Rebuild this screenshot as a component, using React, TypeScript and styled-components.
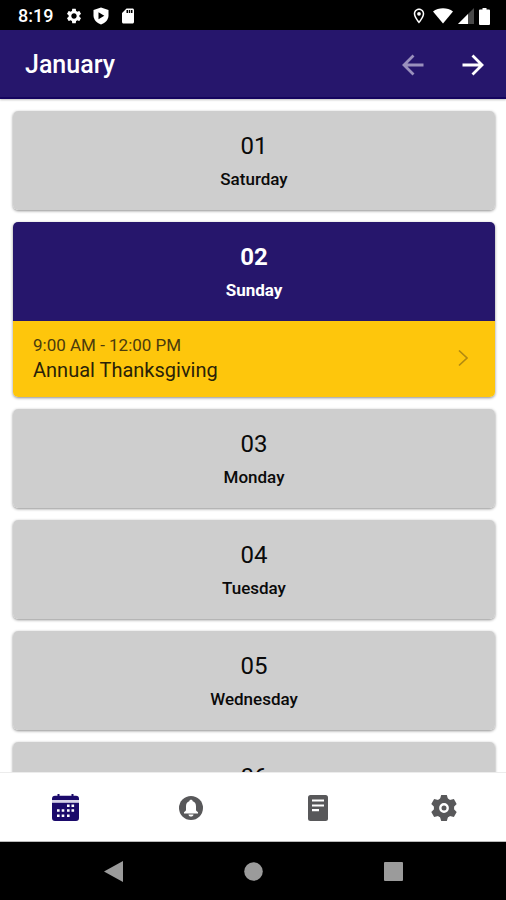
import React from "react";
import styled, { createGlobalStyle, css } from "styled-components";
import { MdSettings, MdSdCard, MdOutlineLocationOn } from "react-icons/md";

const colors = {
  navy: "#26166c",
  navyEdge: "#15045f",
  gold: "#fec60c",
  card: "#cecece",
  tab: "#58585a",
};

const GlobalStyle = createGlobalStyle`
  * { box-sizing: border-box; }
  body { margin: 0; background: #fff; font-family: Roboto, sans-serif; }
  button { font: inherit; border: 0; padding: 0; margin: 0; background: none; color: inherit; cursor: pointer; }
  svg { display: block; flex: none; }
`;

const Screen = styled.div`
  display: flex;
  flex-direction: column;
  height: 100vh;
  overflow: hidden;
`;

const StatusBar = styled.div`
  flex: none;
  display: flex;
  align-items: center;
  justify-content: space-between;
  height: 30px;
  padding: 2px 16px 0 18px;
  background: #000;
  color: #fff;
`;

const StatusGroup = styled.div<{ $gap: number }>`
  display: flex;
  align-items: center;
  gap: ${(p) => p.$gap}px;
`;

const Clock = styled.time`
  font-size: 18px;
  font-weight: 500;
  line-height: 24px;
  margin-right: 2px;
`;

const Header = styled.header`
  flex: none;
  display: flex;
  align-items: center;
  justify-content: space-between;
  height: 69px;
  padding: 2px 18px 0 25px;
  background: ${colors.navy};
  border-bottom: 2px solid ${colors.navyEdge};
  box-shadow: 0 1px 2px rgba(0, 0, 0, 0.25);
  color: #fff;
  z-index: 1;
`;

const Title = styled.h1`
  margin: 0;
  font-size: 25px;
  font-weight: 500;
  line-height: 32px;
`;

const HeaderActions = styled.div`
  display: flex;
  gap: 30px;
`;

const ArrowButton = styled.button`
  display: grid;
  place-items: center;
  width: 30px;
  height: 32px;

  &:disabled {
    color: #9a90bd;
    cursor: default;
  }
`;

const DayList = styled.main`
  flex: 1;
  min-height: 0;
  overflow-y: auto;
  scrollbar-width: none;
  display: flex;
  flex-direction: column;
  gap: 12px;
  padding: 12px 11px 12px 13px;
`;

const DayCard = styled.section`
  flex: none;
  border-radius: 5px;
  overflow: hidden;
  box-shadow: 0 1px 3px rgba(0, 0, 0, 0.45);
`;

const DayHead = styled.div<{ $active: boolean }>`
  display: flex;
  flex-direction: column;
  align-items: center;
  gap: 7px;
  height: 99px;
  padding-top: 21px;
  background: ${colors.card};
  color: #0a0a0a;
  ${(p) =>
    p.$active &&
    css`
      background: ${colors.navy};
      color: #fff;
    `}
`;

const DayNumber = styled.h2<{ $active: boolean }>`
  margin: 0;
  font-size: 24px;
  line-height: 28px;
  font-weight: ${(p) => (p.$active ? 700 : 400)};
`;

const DayName = styled.p<{ $active: boolean }>`
  margin: 0;
  font-size: 17px;
  line-height: 24px;
  font-weight: ${(p) => (p.$active ? 700 : 500)};
`;

const EventRow = styled.button`
  display: flex;
  align-items: center;
  justify-content: space-between;
  width: 100%;
  height: 76px;
  padding: 0 26px 2px 20px;
  background: ${colors.gold};
  text-align: left;
`;

const EventText = styled.span`
  display: flex;
  flex-direction: column;
`;

const EventTime = styled.span`
  font-size: 17px;
  line-height: 24px;
  color: #4b3b0d;
`;

const EventName = styled.span`
  font-size: 20px;
  line-height: 26px;
  color: #2a2208;
`;

const TabBar = styled.nav`
  flex: none;
  display: grid;
  grid-template-columns: repeat(4, 1fr);
  gap: 2px;
  height: 70px;
  padding: 1px 0 0 3px;
  background: #fff;
  border-top: 1px solid #ececec;
  border-bottom: 1px solid #bbb;
`;

const Tab = styled.button<{ $active?: boolean }>`
  display: grid;
  place-items: center;
  color: ${(p) => (p.$active ? "#1b0a6b" : colors.tab)};
`;

const SystemNav = styled.div`
  flex: none;
  display: flex;
  justify-content: center;
  height: 58px;
  background: #000;
  color: #9b9b9b;
`;

const SystemButton = styled.button`
  display: grid;
  place-items: center;
  width: 140px;
`;

const ShieldIcon = () => (
  <svg width="16" height="18" viewBox="0 0 16 18" aria-hidden="true">
    <path fill="currentColor" d="M8 0.5 15.500 3v5.500c0 4-3 7.400-7.500 9C3.500 15.900.5 12.500.5 8.500V3z" />
    <path d="M5.500 5.200v7l5.800-3.500z" fill="#000" />
  </svg>
);

const WifiIcon = () => (
  <svg width="20" height="16" viewBox="0 0 20 16" aria-hidden="true">
    <path fill="currentColor" d="M0 3.500C5.500-.7 14.500-.7 20 3.500L10 15.500z" />
  </svg>
);

const SignalIcon = () => (
  <svg width="16" height="16" viewBox="0 0 16 16" aria-hidden="true">
    <path d="M0 16 16 0v16z" fill="#484848" />
    <path d="M0 16 10 6v10z" fill="currentColor" />
  </svg>
);

const BatteryIcon = () => (
  <svg width="11" height="17" viewBox="0 0 11 17" aria-hidden="true">
    <path fill="currentColor" d="M3.500 0h4v1.500H10q1 0 1 1V16q0 1-1 1H1q-1 0-1-1V2.500q0-1 1-1h2.500z" />
  </svg>
);

const ArrowIcon = ({ back = false }: { back?: boolean }) => (
  <svg width="22" height="22" viewBox="0 0 22 22" fill="none" stroke="currentColor" strokeWidth="2.800" aria-hidden="true">
    <path d={back ? "M21.500 11H2M11.500 1.500 2 11l9.500 9.500" : "M.5 11H20M10.500 1.500 20 11l-9.500 9.500"} />
  </svg>
);

const ChevronIcon = () => (
  <svg width="12" height="18" viewBox="0 0 12 18" fill="none" stroke="#b38a10" strokeWidth="1.700" aria-hidden="true">
    <path d="M2 1.500 10 9l-8 7.500" />
  </svg>
);

const CalendarIcon = () => (
  <svg width="27" height="27" viewBox="0 0 27 27" aria-hidden="true">
    <path
      fill="currentColor"
      d="M5.500 0h2v1.700h12V0h2v1.700H24q3 0 3 3V6H0V4.700q0-3 3-3h2.500zM0 8.500h27V24q0 3-3 3H3q-3 0-3-3z"
    />
    <path fill="#d5d0e8" d="M0 6h27v2.500H0z" />
    <g fill="#fff">
      <path d="M15 10.500h2.600v2.500H15zM19.500 10.500h2.600v2.500h-2.600z" />
      <path d="M5 15.300h2.600v2.500H5zM9.700 15.300h2.600v2.500H9.700zM15 15.300h2.600v2.500H15zM19.500 15.300h2.600v2.500h-2.600z" />
      <path d="M5 20.500h2.600V23H5zM9.700 20.500h2.600V23H9.700zM15 20.500h2.600V23H15z" />
    </g>
  </svg>
);

const BellIcon = () => (
  <svg width="24" height="24" viewBox="0 0 24 24" aria-hidden="true">
    <circle cx="12" cy="12" r="12" fill="currentColor" />
    <path
      fill="#fff"
      d="M12 3.800c1 0 1.600.6 1.700 1.400 2.200.7 3.300 2.400 3.300 5v3.500c0 .9.700 1.500 2 2.600v1.300H5v-1.300c1.300-1.100 2-1.700 2-2.600v-3.500c0-2.600 1.100-4.300 3.300-5 .1-.8.700-1.400 1.700-1.400zM9.500 18.400h5c-.2 1.400-1.100 2.200-2.500 2.200s-2.300-.8-2.500-2.200z"
    />
  </svg>
);

const ReaderIcon = () => (
  <svg width="20" height="26" viewBox="0 0 20 26" aria-hidden="true">
    <rect width="20" height="26" rx="2.500" fill="currentColor" />
    <path d="M4 5.500h12M4 10.500h12M4 15.200h7" stroke="#fff" strokeWidth="2.200" />
  </svg>
);

const CogIcon = () => (
  <svg width="26" height="26" viewBox="0 0 26 26" aria-hidden="true">
    <circle cx="13" cy="13" r="10.200" fill="currentColor" />
    <g fill="currentColor">
      {[0, 60, 120].map((angle) => (
        <path key={angle} transform={`rotate(${angle} 13 13)`} d="M10.200 0h5.600l1.200 4v18l-1.200 4h-5.600L9 22V4z" />
      ))}
    </g>
    <circle cx="13" cy="13" r="3.700" fill="none" stroke="#fff" strokeWidth="2.400" />
  </svg>
);

type CalendarDay = {
  number: string;
  name: string;
  event?: { time: string; name: string };
};

const days: CalendarDay[] = [
  { number: "01", name: "Saturday" },
  { number: "02", name: "Sunday", event: { time: "9:00 AM - 12:00 PM", name: "Annual Thanksgiving" } },
  { number: "03", name: "Monday" },
  { number: "04", name: "Tuesday" },
  { number: "05", name: "Wednesday" },
  { number: "06", name: "Thursday" },
];

const Day = ({ number, name, event }: CalendarDay) => (
  <DayCard>
    <DayHead $active={!!event}>
      <DayNumber $active={!!event}>{number}</DayNumber>
      <DayName $active={!!event}>{name}</DayName>
    </DayHead>
    {event && (
      <EventRow type="button">
        <EventText>
          <EventTime>{event.time}</EventTime>
          <EventName>{event.name}</EventName>
        </EventText>
        <ChevronIcon />
      </EventRow>
    )}
  </DayCard>
);

export default function App() {
  return (
    <>
      <GlobalStyle />
      <Screen>
        <StatusBar>
          <StatusGroup $gap={10}>
            <Clock>8:19</Clock>
            <MdSettings size={18} />
            <ShieldIcon />
            <MdSdCard size={18} />
          </StatusGroup>
          <StatusGroup $gap={5}>
            <MdOutlineLocationOn size={18} />
            <WifiIcon />
            <SignalIcon />
            <BatteryIcon />
          </StatusGroup>
        </StatusBar>
        <Header>
          <Title>January</Title>
          <HeaderActions>
            <ArrowButton type="button" aria-label="Previous month" disabled>
              <ArrowIcon back />
            </ArrowButton>
            <ArrowButton type="button" aria-label="Next month">
              <ArrowIcon />
            </ArrowButton>
          </HeaderActions>
        </Header>
        <DayList>
          {days.map((day) => (
            <Day key={day.number} {...day} />
          ))}
        </DayList>
        <TabBar>
          <Tab type="button" aria-label="Calendar" $active>
            <CalendarIcon />
          </Tab>
          <Tab type="button" aria-label="Notifications">
            <BellIcon />
          </Tab>
          <Tab type="button" aria-label="Notes">
            <ReaderIcon />
          </Tab>
          <Tab type="button" aria-label="Settings">
            <CogIcon />
          </Tab>
        </TabBar>
        <SystemNav>
          <SystemButton type="button" aria-label="Back">
            <svg width="19" height="21" viewBox="0 0 19 21" aria-hidden="true">
              <path fill="currentColor" d="M19 0v21L0 10.500z" />
            </svg>
          </SystemButton>
          <SystemButton type="button" aria-label="Home">
            <svg width="19" height="19" viewBox="0 0 19 19" aria-hidden="true">
              <circle cx="9.500" cy="9.500" r="9.300" fill="currentColor" />
            </svg>
          </SystemButton>
          <SystemButton type="button" aria-label="Recent apps">
            <svg width="19" height="19" viewBox="0 0 19 19" aria-hidden="true">
              <rect width="19" height="19" rx="1" fill="currentColor" />
            </svg>
          </SystemButton>
        </SystemNav>
      </Screen>
    </>
  );
}
